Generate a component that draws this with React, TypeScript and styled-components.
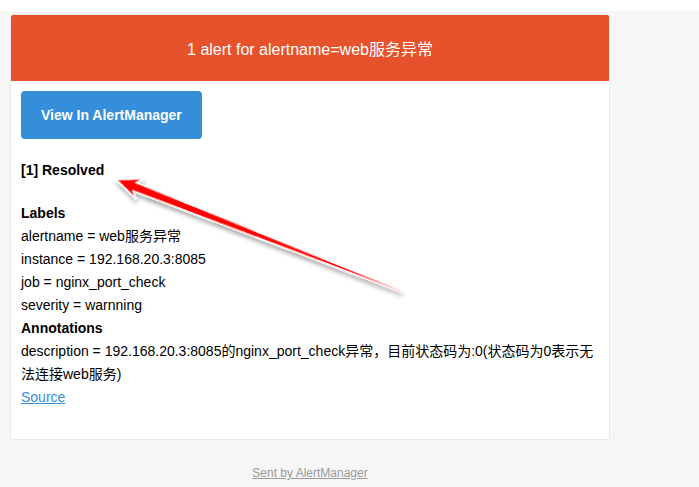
import React from "react";
import styled, { createGlobalStyle } from "styled-components";

const GlobalStyle = createGlobalStyle`
  html, body {
    margin: 0;
    padding: 0;
    background: #f6f6f6;
  }
  body {
    font-family: "Liberation Sans", Arial, "Noto Sans CJK SC", sans-serif;
    font-size: 14px;
    color: #000;
  }
`;

const Page = styled.div`
  position: relative;
  width: 699px;
  min-height: 487px;
  background: #f6f6f6;
`;

const TopStrip = styled.div`
  height: 11px;
  background: #ffffff;
`;

const Container = styled.div`
  padding: 3px 0 0 10px;
  width: 600px;
`;

const Card = styled.div`
  background: #ffffff;
  border: 1px solid #e9e9e9;
  border-radius: 3px;
  overflow: hidden;
`;

const Header = styled.div`
  height: 67px;
  margin: -1px -1px 0;
  background: #e6522c;
  color: #ffffff;
  font-size: 16px;
  display: flex;
  align-items: center;
  justify-content: center;
  border-radius: 3px 3px 0 0;
`;

const Body = styled.div`
  padding: 10px 10px 30px;
  line-height: 23px;
`;

const Button = styled.a`
  display: inline-block;
  background: #348eda;
  color: #ffffff;
  font-weight: bold;
  font-size: 14px;
  line-height: 24px;
  padding: 12px 20px;
  border-radius: 4px;
  text-decoration: none;
  margin-bottom: 20px;
`;

const Heading = styled.div`
  font-weight: bold;
  margin-bottom: ${(p: { $gap?: number }) => p.$gap ?? 0}px;
`;

const Line = styled.div`
  word-break: break-all;
`;

const Link = styled.a`
  color: #348eda;
  text-decoration: underline;
`;

const Footer = styled.div`
  padding-top: 25px;
  text-align: center;
  font-size: 12px;
  line-height: 16px;
`;

const FooterLink = styled.a`
  color: #999999;
  text-decoration: underline;
`;

const Overlay = styled.svg`
  position: absolute;
  left: 0;
  top: 0;
  pointer-events: none;
`;

const labels = [
  "alertname = web服务异常",
  "instance = 192.168.20.3:8085",
  "job = nginx_port_check",
  "severity = warnning",
];

export default function App() {
  return (
    <Page>
      <GlobalStyle />
      <TopStrip />
      <Container>
        <Card>
          <Header>1 alert for alertname=web服务异常</Header>
          <Body>
            <Button href="#">View In AlertManager</Button>
            <Heading $gap={20}>[1] Resolved</Heading>
            <Heading>Labels</Heading>
            {labels.map((l) => (
              <Line key={l}>{l}</Line>
            ))}
            <Heading>Annotations</Heading>
            <Line>
              description = 192.168.20.3:8085的nginx_port_check异常，目前状态码为:0(状态码为0表示无法连接web服务)
            </Line>
            <Line>
              <Link href="#">Source</Link>
            </Line>
          </Body>
        </Card>
        <Footer>
          <FooterLink href="#">Sent by AlertManager</FooterLink>
        </Footer>
      </Container>
      <Overlay width="699" height="487" viewBox="0 0 699 487">
        <defs>
          <filter id="sh" x="-20%" y="-50%" width="140%" height="200%">
            <feDropShadow dx="2" dy="3" stdDeviation="2" floodColor="#000" floodOpacity="0.35" />
          </filter>
        </defs>
        <g transform="translate(116 179.5) rotate(21.35)" filter="url(#sh)">
          <polygon
            points="0,0 26,-11 20,-4.5 306,-0.8 306,0.8 20,4.5 26,11"
            fill="#ff0000"
            stroke="#ffffff"
            strokeWidth="1.4"
            strokeLinejoin="miter"
          />
        </g>
      </Overlay>
    </Page>
  );
}
